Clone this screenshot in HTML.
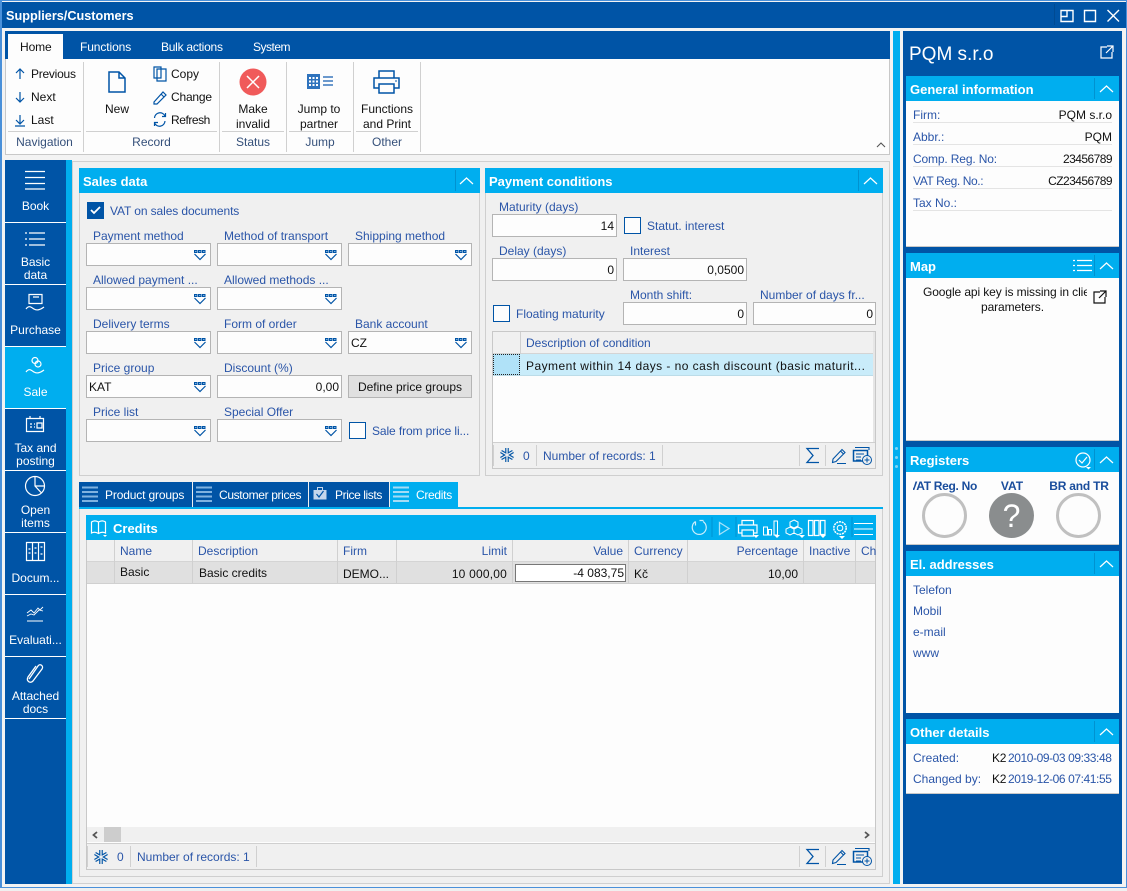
<!DOCTYPE html>
<html><head><meta charset="utf-8"><title>Suppliers/Customers</title>
<style>
html,body{margin:0;padding:0}
body{width:1127px;height:891px;position:relative;overflow:hidden;background:#f0f0f0;font:12px "Liberation Sans",sans-serif;color:#111}
.b{position:absolute;box-sizing:border-box}
.t{position:absolute;white-space:nowrap;line-height:16px;color:#111}
.l{color:#2a55a8}
.n{color:#fff;text-align:center;width:61px;left:5px;line-height:13px;white-space:normal}
.h{position:absolute;background:#00aeef;height:25px}
.h b{position:absolute;left:4px;top:5px;color:#fff;font-size:13px;line-height:17px;white-space:nowrap}
.h i{position:absolute;right:24px;top:2px;width:1px;height:21px;background:#0092d0}
.f{position:absolute;box-sizing:border-box;background:#fdfdfd;border:1px solid #b4b4b4;height:23px}
.c{position:absolute;box-sizing:border-box;width:17px;height:17px;border:1.5px solid #0054a6;background:#fdfdfd}
svg{position:absolute;overflow:visible;fill:none}
.w{stroke:#fff;stroke-width:1.2}
.u{stroke:#0054a6;stroke-width:1.2}
.g{position:absolute;background:#d0d0d0}
.r{text-align:right}
.m{text-align:center}
.d{letter-spacing:-.55px}
</style></head><body>
<svg width="0" height="0" style="position:absolute"><defs>
<g id="cb"><path d="M0.500 1.500h2.500v2H.5zM4.500 1.500h2.500v2h-2.500zM8.500 1.500h2.500v2H8.500z" stroke="#0054a6" fill="#7fb2e0"/><path d="M0.500 5 6 10.500 11.500 5" stroke="#0054a6" stroke-width="1.200"/></g>
<path id="up" d="M0 7 6.500 1 13 7" stroke="#fff" stroke-width="1.200" fill="none"/>
<g id="bars"><path d="M0 1.500H16M0 6H16M0 10.500H16M0 15H16" stroke="#7fb2e0" stroke-width="2"/></g>
<g id="foot"><path d="M13 1.500H1L7 8.500 1 15.500H13" stroke="#0054a6" stroke-width="1.300"/><path d="M27 12 36 2.500 39 5.500 30 14.500 26.500 15.500ZM34.500 4 37.500 7M31 16.500H40" stroke="#0054a6" stroke-width="1.100"/><path d="M49 .5H63V3" stroke="#0054a6" stroke-width="1.100"/><path d="M47.500 3.500H61.500V14H47.500Z" stroke="#0054a6" stroke-width="1.500"/><path d="M50 7H58M50 10H55M50 13H55" stroke="#0054a6"/><circle cx="61" cy="13" r="4.500" fill="#f0f0f0" stroke="#0054a6"/><path d="M58.500 13H63.500M61 10.500V15.500" stroke="#0054a6"/></g>
<g id="snow"><path d="M8 1V15M2 4.500 14 11.500M14 4.500 2 11.500" stroke="#0054a6" stroke-width="3.600"/><path d="M8 1V15M2 4.500 14 11.500M14 4.500 2 11.500" stroke="#f0f0f0" stroke-width="1.300"/></g>
</defs></svg>

<!-- window -->
<div class="b" style="left:0;top:0;width:1127px;height:888px;background:#f3f3f3;border:1px solid #4a90d9;border-left-width:2px"></div>
<div class="b" style="left:2px;top:2px;width:1124px;height:26px;background:#0054a6"></div>
<div class="t" style="left:6px;top:8px;color:#fff;font-weight:bold;font-size:12.700px">Suppliers/Customers</div>
<div class="g" style="left:1054px;top:4px;width:1px;height:21px;background:#004a92"></div>
<svg style="left:1060px;top:9px" width="60" height="14"><path d="M1 1.500h12v11H1zM1 7.500h6V1.500" stroke="#fff" stroke-width="1.400"/><path d="M24.500 1.500h11v11H24.500z" stroke="#fff" stroke-width="1.400"/><path d="M47.500 1 59 12.500M59 1 47.500 12.500" stroke="#fff" stroke-width="1.400"/></svg>

<!-- ribbon -->
<div class="b" style="left:5px;top:31px;width:885px;height:124px;background:#fdfdfd;border:1px solid #c8c8c8"></div>
<div class="b" style="left:5px;top:31px;width:885px;height:28px;background:#0054a6"></div>
<div class="b" style="left:8px;top:34px;width:55px;height:25px;background:#fdfdfd"></div>
<div class="t" style="left:20px;top:39px;letter-spacing:-.1px">Home</div>
<div class="t" style="left:80px;top:39px;color:#fff;letter-spacing:-.1px">Functions</div>
<div class="t" style="left:161px;top:39px;color:#fff;letter-spacing:-.25px">Bulk actions</div>
<div class="t" style="left:253px;top:39px;color:#fff;letter-spacing:-.5px">System</div>
<div class="g" style="left:83px;top:62px;width:1px;height:90px"></div>
<div class="g" style="left:219px;top:62px;width:1px;height:90px"></div>
<div class="g" style="left:286px;top:62px;width:1px;height:90px"></div>
<div class="g" style="left:353px;top:62px;width:1px;height:90px"></div>
<div class="g" style="left:420px;top:62px;width:1px;height:90px"></div>
<div class="g" style="left:8px;top:131px;width:73px;height:1px"></div>
<div class="g" style="left:86px;top:131px;width:131px;height:1px"></div>
<div class="g" style="left:222px;top:131px;width:62px;height:1px"></div>
<div class="g" style="left:289px;top:131px;width:62px;height:1px"></div>
<div class="g" style="left:356px;top:131px;width:62px;height:1px"></div>
<svg style="left:15px;top:68px" width="10" height="60"><path d="M5 1V11M1 5 5 1 9 5M5 24V34M1 30 5 34 9 30M5 47V56M1 52 5 56 9 52M0 58H10" class="u"/></svg>
<div class="t" style="left:31px;top:66px;letter-spacing:-.25px">Previous</div>
<div class="t" style="left:31px;top:89px">Next</div>
<div class="t" style="left:31px;top:112px">Last</div>
<svg style="left:108px;top:71px" width="18" height="22"><path d="M1 1h10l6 6v14H1zM11 1v6h6" stroke="#0054a6" stroke-width="1.500"/></svg>
<div class="t m" style="left:97px;top:101px;width:40px">New</div>
<svg style="left:153px;top:66px" width="14" height="62"><path d="M1 1h7v11H1zM4 3h9v12H4z" class="u" fill="#fdfdfd"/><path d="M1 36 10 26l3 3-9 9H1zM8 28l3 3" class="u"/><path d="M1.500 52a5.500 5.500 0 0 1 10.500-2M12.500 47v3.500H9M12 55a5.500 5.500 0 0 1-10.500 2M1.500 60v-3.500H5" class="u"/></svg>
<div class="t" style="left:171px;top:66px">Copy</div>
<div class="t" style="left:171px;top:89px;letter-spacing:-.2px">Change</div>
<div class="t" style="left:171px;top:112px;letter-spacing:-.45px">Refresh</div>
<svg style="left:239px;top:68px" width="28" height="28"><circle cx="14" cy="14" r="13.500" fill="#f05a5a"/><path d="M8 8 20 20M20 8 8 20" stroke="#fff" stroke-width="1.500"/></svg>
<div class="t m" style="left:223px;top:102px;width:60px;line-height:15px">Make<br>invalid</div>
<svg style="left:307px;top:74px" width="26" height="16"><path d="M0 0h13v15H0z" fill="#2f73bd"/><path d="M2 3h2v2H2zM5.500 3h2v2h-2zM9 3h2v2H9zM2 6.500h2v2H2zM5.500 6.500h2v2h-2zM9 6.500h2v2H9zM2 10h2v2H2zM5.500 10h2v2h-2zM9 10h2v2H9z" fill="#fff"/><path d="M16 3H26M16 7H26M16 11H26" stroke="#3b78bd" stroke-width="1.500"/></svg>
<div class="t m" style="left:289px;top:102px;width:60px;line-height:15px">Jump to<br>partner</div>
<svg style="left:373px;top:70px" width="27" height="25"><path d="M6 8V1h15v7M6 18H1V8h25v10h-5M6 14h15v9H6z" stroke="#0054a6" stroke-width="1.500"/><path d="M22 11h2" stroke="#0054a6"/></svg>
<div class="t m" style="left:354px;top:102px;width:66px;line-height:15px">Functions<br>and Print</div>
<div class="t m l" style="left:8px;top:134px;width:73px;color:#35507a">Navigation</div>
<div class="t m" style="left:86px;top:134px;width:131px;color:#35507a">Record</div>
<div class="t m" style="left:222px;top:134px;width:62px;color:#35507a">Status</div>
<div class="t m" style="left:289px;top:134px;width:62px;color:#35507a">Jump</div>
<div class="t m" style="left:356px;top:134px;width:62px;color:#35507a">Other</div>
<svg style="left:876px;top:142px" width="10" height="6"><path d="M1 5 5 1 9 5" stroke="#555" stroke-width="1.100"/></svg>

<!-- left nav -->
<div class="b" style="left:5px;top:160px;width:61px;height:724px;background:#0054a6"></div>
<div class="b" style="left:66px;top:160px;width:6px;height:724px;background:#00aeef"></div>
<div class="b" style="left:5px;top:346px;width:61px;height:62px;background:#00aeef"></div>
<div class="b" style="left:5px;top:222px;width:61px;height:1px;background:#fff"></div>
<div class="b" style="left:5px;top:284px;width:61px;height:1px;background:#fff"></div>
<div class="b" style="left:5px;top:346px;width:61px;height:1px;background:#fff"></div>
<div class="b" style="left:5px;top:408px;width:61px;height:1px;background:#fff"></div>
<div class="b" style="left:5px;top:470px;width:61px;height:1px;background:#fff"></div>
<div class="b" style="left:5px;top:532px;width:61px;height:1px;background:#fff"></div>
<div class="b" style="left:5px;top:594px;width:61px;height:1px;background:#fff"></div>
<div class="b" style="left:5px;top:656px;width:61px;height:1px;background:#fff"></div>
<div class="b" style="left:5px;top:718px;width:61px;height:1px;background:#fff"></div>
<svg style="left:25px;top:171px" width="20" height="20"><path d="M0 .5H20M0 6.500H20M0 12.500H20M0 18H20" class="w"/></svg>
<div class="t n" style="top:200px">Book</div>
<svg style="left:25px;top:232px" width="20" height="16"><path d="M0 1h2M0 7h2M0 13h2" class="w"/><path d="M4 1H20M4 7H20M4 13H20" class="w"/></svg>
<div class="t n" style="top:256px">Basic<br>data</div>
<svg style="left:26px;top:294px" width="20" height="20"><path d="M3 .5h13v9H3zM7 3h6" class="w"/><path d="M0 15c3-4 5-2 8 0s6 1 10-2" class="w"/></svg>
<div class="t n" style="top:324px">Purchase</div>
<svg style="left:26px;top:357px" width="20" height="20"><circle cx="9" cy="3.500" r="3" class="w"/><circle cx="12" cy="7" r="3" class="w"/><path d="M0 15c3-4 5-2 8 0s6 1 10-2" class="w"/></svg>
<div class="t n" style="top:386px">Sale</div>
<svg style="left:26px;top:416px" width="19" height="17"><path d="M.5 2.500h17v13H.5zM4 0v3M14 0v3M4 8h2M4 11h2M8 8h1M8 11h1M11 7h5v5h-5z" class="w"/></svg>
<div class="t n" style="top:442px">Tax and<br>posting</div>
<svg style="left:25px;top:476px" width="20" height="20"><circle cx="10" cy="10" r="9.500" class="w"/><path d="M10 .5V10L16.500 17M10 10H19.500" class="w"/></svg>
<div class="t n" style="top:504px">Open<br>items</div>
<svg style="left:26px;top:542px" width="19" height="19"><path d="M.5.5h18v18H.5zM6.500.5v18M12.500.5v18M2.500 7h2M2.500 11h2M8.500 6h2M8.500 11h2M14.500 5h2M14.500 12h2" class="w"/></svg>
<div class="t n" style="top:572px">Docum...</div>
<svg style="left:27px;top:605px" width="17" height="17"><path d="M0 8 4 5 7 8 11 3 13 5 16 2M0 11l4-2 3 1 5-5 4 1M0 16H16" stroke="#fff" stroke-width=".9"/></svg>
<div class="t n" style="top:634px">Evaluati...</div>
<svg style="left:27px;top:662px" width="17" height="24"><path d="M3 18 12 5c2-3 6 0 4 3L7 20c-3 3-7 0-5-4L10 5" stroke="#fff" stroke-width="1.300" transform="translate(-1 -1)"/></svg>
<div class="t n" style="top:690px">Attached<br>docs</div>

<!-- content frame -->
<div class="b" style="left:72px;top:161px;width:818px;height:723px;background:#f0f0f0;border:1px solid #d0d0d0"></div>

<!-- Sales data -->
<div class="b" style="left:79px;top:168px;width:401px;height:308px;border:1px solid #cfcfcf"></div>
<div class="h" style="left:79px;top:168px;width:401px"><b>Sales data</b><i></i></div>
<svg style="left:460px;top:177px" width="14" height="8"><use href="#up"/></svg>
<div class="c" style="left:87px;top:202px;background:#0054a6"></div>
<svg style="left:90px;top:206px" width="11" height="9"><path d="M1 4 4 7 10 1" stroke="#fff" stroke-width="1.800"/></svg>
<div class="t l" style="left:110px;top:203px;letter-spacing:-.1px">VAT on sales documents</div>

<div class="t l" style="left:93px;top:228px">Payment method</div>
<div class="t l" style="left:224px;top:228px">Method of transport</div>
<div class="t l" style="left:355px;top:228px">Shipping method</div>
<div class="f" style="left:86px;top:243px;width:125px"></div>
<div class="f" style="left:217px;top:243px;width:125px"></div>
<div class="f" style="left:348px;top:243px;width:124px"></div>
<svg style="left:194px;top:249px" width="12" height="12"><use href="#cb"/></svg>
<svg style="left:325px;top:249px" width="12" height="12"><use href="#cb"/></svg>
<svg style="left:455px;top:249px" width="12" height="12"><use href="#cb"/></svg>

<div class="t l" style="left:93px;top:272px">Allowed payment ...</div>
<div class="t l" style="left:224px;top:272px">Allowed methods ...</div>
<div class="f" style="left:86px;top:287px;width:125px"></div>
<div class="f" style="left:217px;top:287px;width:125px"></div>
<svg style="left:194px;top:293px" width="12" height="12"><use href="#cb"/></svg>
<svg style="left:325px;top:293px" width="12" height="12"><use href="#cb"/></svg>

<div class="t l" style="left:93px;top:316px">Delivery terms</div>
<div class="t l" style="left:224px;top:316px">Form of order</div>
<div class="t l" style="left:355px;top:316px">Bank account</div>
<div class="f" style="left:86px;top:331px;width:125px"></div>
<div class="f" style="left:217px;top:331px;width:125px"></div>
<div class="f" style="left:348px;top:331px;width:124px"></div>
<div class="t" style="left:351px;top:335px">CZ</div>
<svg style="left:194px;top:337px" width="12" height="12"><use href="#cb"/></svg>
<svg style="left:325px;top:337px" width="12" height="12"><use href="#cb"/></svg>
<svg style="left:455px;top:337px" width="12" height="12"><use href="#cb"/></svg>

<div class="t l" style="left:93px;top:360px">Price group</div>
<div class="t l" style="left:224px;top:360px">Discount (%)</div>
<div class="f" style="left:86px;top:375px;width:125px"></div>
<div class="f" style="left:217px;top:375px;width:125px"></div>
<div class="t" style="left:89px;top:379px">KAT</div>
<div class="t r" style="left:220px;top:379px;width:119px">0,00</div>
<svg style="left:194px;top:381px" width="12" height="12"><use href="#cb"/></svg>
<div class="b" style="left:348px;top:375px;width:124px;height:23px;background:#e0e0e0;border:1px solid #b4b4b4"></div>
<div class="t m" style="left:348px;top:379px;width:124px">Define price groups</div>

<div class="t l" style="left:93px;top:404px">Price list</div>
<div class="t l" style="left:224px;top:404px">Special Offer</div>
<div class="f" style="left:86px;top:419px;width:125px"></div>
<div class="f" style="left:217px;top:419px;width:125px"></div>
<svg style="left:194px;top:425px" width="12" height="12"><use href="#cb"/></svg>
<svg style="left:325px;top:425px" width="12" height="12"><use href="#cb"/></svg>
<div class="c" style="left:349px;top:422px"></div>
<div class="t l" style="left:372px;top:423px;letter-spacing:-.1px">Sale from price li...</div>

<!-- Payment conditions -->
<div class="b" style="left:485px;top:168px;width:398px;height:308px;border:1px solid #cfcfcf"></div>
<div class="h" style="left:485px;top:168px;width:398px"><b>Payment conditions</b><i></i></div>
<svg style="left:864px;top:177px" width="14" height="8"><use href="#up"/></svg>
<div class="t l" style="left:499px;top:199px">Maturity (days)</div>
<div class="f" style="left:492px;top:214px;width:125px"></div>
<div class="t r" style="left:495px;top:218px;width:119px">14</div>
<div class="c" style="left:624px;top:217px"></div>
<div class="t l" style="left:647px;top:218px">Statut. interest</div>
<div class="t l" style="left:499px;top:243px">Delay (days)</div>
<div class="t l" style="left:630px;top:243px">Interest</div>
<div class="f" style="left:492px;top:258px;width:125px"></div>
<div class="f" style="left:623px;top:258px;width:124px"></div>
<div class="t r" style="left:495px;top:262px;width:119px">0</div>
<div class="t r" style="left:626px;top:262px;width:118px">0,0500</div>
<div class="c" style="left:493px;top:305px"></div>
<div class="t l" style="left:516px;top:306px">Floating maturity</div>
<div class="t l" style="left:630px;top:287px">Month shift:</div>
<div class="t l" style="left:760px;top:287px">Number of days fr...</div>
<div class="f" style="left:623px;top:302px;width:124px"></div>
<div class="f" style="left:753px;top:302px;width:123px"></div>
<div class="t r" style="left:626px;top:306px;width:118px">0</div>
<div class="t r" style="left:756px;top:306px;width:117px">0</div>

<div class="b" style="left:492px;top:331px;width:384px;height:138px;background:#fdfdfd;border:1px solid #c8c8c8"></div>
<div class="b" style="left:493px;top:332px;width:382px;height:22px;background:#f0f0f0;border-bottom:1px solid #d4d4d4"></div>
<div class="g" style="left:520px;top:332px;width:1px;height:22px"></div>
<div class="t l" style="left:526px;top:335px">Description of condition</div>
<div class="b" style="left:493px;top:354px;width:380px;height:22px;background:#c9ecfa;border-bottom:1px solid #bcdce8"></div>
<div class="b" style="left:493px;top:354px;width:27px;height:21px;background:#b0e2f8;border:1px dotted #222"></div>
<div class="t" style="left:526px;top:358px;letter-spacing:.45px">Payment within 14 days - no cash discount (basic maturit...</div>
<div class="b" style="left:873px;top:332px;width:2px;height:110px;background:#e6e6e6"></div>
<div class="b" style="left:493px;top:442px;width:382px;height:26px;background:#f0f0f0;border-top:1px solid #cfcfcf"></div>
<div class="g" style="left:493px;top:445px;width:1px;height:21px"></div>
<div class="g" style="left:536px;top:445px;width:1px;height:21px"></div>
<div class="g" style="left:662px;top:445px;width:1px;height:21px"></div>
<div class="g" style="left:799px;top:445px;width:1px;height:21px"></div>
<div class="g" style="left:825px;top:445px;width:1px;height:21px"></div>
<svg style="left:499px;top:447px" width="16" height="16"><use href="#snow"/></svg>
<div class="t l" style="left:523px;top:448px">0</div>
<div class="t l" style="left:543px;top:448px">Number of records: 1</div>
<svg style="left:806px;top:447px" width="68" height="20"><use href="#foot"/></svg>

<!-- Tabs -->
<div class="b" style="left:79px;top:482px;width:113px;height:25px;background:#0054a6"></div>
<div class="b" style="left:193px;top:482px;width:115px;height:25px;background:#0054a6"></div>
<div class="b" style="left:309px;top:482px;width:80px;height:25px;background:#0054a6"></div>
<div class="b" style="left:390px;top:482px;width:68px;height:25px;background:#00aeef"></div>
<div class="b" style="left:79px;top:507px;width:804px;height:2px;background:#00aeef"></div>
<svg style="left:82px;top:486px" width="16" height="16"><use href="#bars"/></svg>
<svg style="left:196px;top:486px" width="16" height="16"><use href="#bars"/></svg>
<svg style="left:393px;top:486px" width="16" height="16"><path d="M0 1.500H16M0 6H16M0 10.500H16M0 15H16" stroke="#a5dcf5" stroke-width="2"/></svg>
<svg style="left:313px;top:487px" width="14" height="13"><path d="M.5 3h13v9.500H.5z" fill="#c4d6ec"/><path d="M4.500 3V.5h5V3" stroke="#c4d6ec"/><path d="M3.500 7l2.500 3 4.500-6" stroke="#0054a6" stroke-width="1.200"/></svg>
<div class="t" style="left:105px;top:487px;color:#fff;letter-spacing:-.15px">Product groups</div>
<div class="t" style="left:219px;top:487px;color:#fff;letter-spacing:-.35px">Customer prices</div>
<div class="t" style="left:335px;top:487px;color:#fff;letter-spacing:-.4px">Price lists</div>
<div class="t" style="left:416px;top:487px;color:#fff;letter-spacing:-.3px">Credits</div>

<!-- Credits panel -->
<div class="b" style="left:79px;top:509px;width:804px;height:368px;border:1px solid #cfcfcf;border-top:0"></div>
<div class="b" style="left:86px;top:515px;width:790px;height:355px;background:#fdfdfd;border:1px solid #c8c8c8"></div>
<div class="h" style="left:86px;top:515px;width:790px"><b style="left:27px">Credits</b></div>
<svg style="left:91px;top:520px" width="16" height="17"><path d="M7.500 2C5 .5 2.500.5 .5 2V13C2.500 12 5 12 7.500 13.500 10 12 12.500 12 14.500 13V2C12.500.5 10 .5 7.500 2ZM7.500 2V13.500" class="w"/><path d="M12 15h4l-2 2z" fill="#fff"/></svg>
<svg style="left:690px;top:519px" width="186" height="19"><path d="M5.500 2.500A7 7 0 1 0 13 2.500M13.500 1.500 9.500 1.500M5.500 2.500V6.500" stroke="#cbeefc" stroke-width="1.200"/>
<path d="M22 -2V18M46 -2V18M162 -2V18" stroke="#0092d0"/>
<path d="M29.500 3.500 39 9.500 29.500 15.500Z" stroke="#a5e2fa" stroke-width="1.300"/>
<path d="M52 6V1.500H63.500V6M52 14H48.500V6H67V14H63.500M52 11H63.500V17H52z" stroke="#fff" stroke-width="1.200"/><path d="M63 16h6l-3 3z" fill="#fff"/>
<path d="M73.500 8h4v8h-4zM78.500 10.500h3v5.500h-3zM84 2h3.500v14H84z" stroke="#fff"/><path d="M84 16h6l-3 3z" fill="#fff"/>
<path d="M104 1l4 2v4l-4 2-4-2V3zM100 8l4 2v4l-4 2-4-2v-4zM108 8l4 2v4l-4 2-4-2v-4z" stroke="#fff"/><path d="M109 16h6l-3 3z" fill="#fff"/>
<path d="M118.500 1.500h4.500v15h-4.500zM124.500 1.500h4.500v15h-4.500zM130.500 1.500h4.500v14h-4.500z" stroke="#fff" stroke-width="1.200"/><path d="M130 16h6l-3 3z" fill="#fff"/>
<circle cx="150" cy="9" r="6.200" stroke="#fff" stroke-width="1.500" stroke-dasharray="2 .8"/><circle cx="150" cy="9" r="2.800" stroke="#fff"/><path d="M149 17h6l-3 3z" fill="#fff"/>
<path d="M164 4.500H183M164 10H183M164 15.500H183" stroke="#fff"/></svg>
<div class="b" style="left:87px;top:540px;width:788px;height:22px;background:#f0f0f0;border-bottom:1px solid #d4d4d4"></div>
<div class="b" style="left:87px;top:562px;width:788px;height:22px;background:#e0e0e0;border-bottom:1px solid #d0d0d0"></div>
<div class="g" style="left:114px;top:540px;width:1px;height:44px"></div>
<div class="g" style="left:192px;top:540px;width:1px;height:44px"></div>
<div class="g" style="left:337px;top:540px;width:1px;height:44px"></div>
<div class="g" style="left:396px;top:540px;width:1px;height:44px"></div>
<div class="g" style="left:512px;top:540px;width:1px;height:44px"></div>
<div class="g" style="left:628px;top:540px;width:1px;height:44px"></div>
<div class="g" style="left:687px;top:540px;width:1px;height:44px"></div>
<div class="g" style="left:803px;top:540px;width:1px;height:44px"></div>
<div class="g" style="left:855px;top:540px;width:1px;height:44px"></div>
<div class="t l" style="left:120px;top:543px">Name</div>
<div class="t l" style="left:198px;top:543px">Description</div>
<div class="t l" style="left:343px;top:543px">Firm</div>
<div class="t l r" style="left:400px;top:543px;width:107px">Limit</div>
<div class="t l r" style="left:516px;top:543px;width:107px">Value</div>
<div class="t l" style="left:634px;top:543px">Currency</div>
<div class="t l r" style="left:690px;top:543px;width:108px">Percentage</div>
<div class="t l" style="left:809px;top:543px">Inactive</div>
<div class="t l" style="left:861px;top:543px">Ch</div>
<div class="t" style="left:120px;top:564px">Basic</div>
<div class="t" style="left:199px;top:565px">Basic credits</div>
<div class="t" style="left:343px;top:566px">DEMO...</div>
<div class="t r" style="left:400px;top:566px;width:107px;letter-spacing:.2px">10 000,00</div>
<div class="b" style="left:515px;top:564px;width:111px;height:18px;background:#fff;border:1px solid #777"></div>
<div class="t r" style="left:516px;top:565px;width:108px">-4 083,75</div>
<div class="t" style="left:634px;top:566px">Kč</div>
<div class="t r" style="left:690px;top:566px;width:108px">10,00</div>
<div class="b" style="left:87px;top:827px;width:788px;height:15px;background:#f0f0f0"></div>
<div class="b" style="left:104px;top:827px;width:17px;height:15px;background:#cdcdcd"></div>
<svg style="left:92px;top:831px" width="6" height="8"><path d="M5 1 1.500 4 5 7" stroke="#555" stroke-width="1.800"/></svg>
<svg style="left:864px;top:831px" width="6" height="8"><path d="M1 1 4.500 4 1 7" stroke="#555" stroke-width="1.800"/></svg>
<div class="b" style="left:87px;top:843px;width:788px;height:26px;background:#f0f0f0;border-top:1px solid #cfcfcf"></div>
<div class="g" style="left:87px;top:846px;width:1px;height:21px"></div>
<div class="g" style="left:130px;top:846px;width:1px;height:21px"></div>
<div class="g" style="left:256px;top:846px;width:1px;height:21px"></div>
<div class="g" style="left:799px;top:846px;width:1px;height:21px"></div>
<div class="g" style="left:825px;top:846px;width:1px;height:21px"></div>
<svg style="left:93px;top:849px" width="16" height="16"><use href="#snow"/></svg>
<div class="t l" style="left:117px;top:849px">0</div>
<div class="t l" style="left:137px;top:849px">Number of records: 1</div>
<svg style="left:806px;top:848px" width="68" height="20"><use href="#foot"/></svg>

<!-- splitter -->
<div class="b" style="left:893px;top:31px;width:7px;height:853px;background:#00aeef"></div>
<div class="b" style="left:895px;top:447px;width:3px;height:3px;border-radius:2px;background:#7fd4f5"></div>
<div class="b" style="left:895px;top:456px;width:3px;height:3px;border-radius:2px;background:#7fd4f5"></div>
<div class="b" style="left:895px;top:465px;width:3px;height:3px;border-radius:2px;background:#7fd4f5"></div>

<!-- right panel -->
<div class="b" style="left:903px;top:31px;width:219px;height:853px;background:#0054a6"></div>
<div class="t" style="left:909px;top:42px;color:#fff;font-size:19px;line-height:26px">PQM s.r.o</div>
<svg style="left:1100px;top:45px" width="14" height="14"><path d="M7 2H1V13H12V7M7 1H13V7M13 1 6 8" stroke="#fff" stroke-width="1.200"/></svg>

<div class="b" style="left:906px;top:76px;width:213px;height:171px;background:#fdfdfd;border-bottom:1px solid #c8c8c8"></div>
<div class="h" style="left:906px;top:76px;width:213px"><b>General information</b><i></i></div>
<svg style="left:1100px;top:85px" width="14" height="8"><use href="#up"/></svg>
<div class="g" style="left:913px;top:122px;width:199px;height:1px;background:#e4e4e4"></div>
<div class="g" style="left:913px;top:144px;width:199px;height:1px;background:#e4e4e4"></div>
<div class="g" style="left:913px;top:166px;width:199px;height:1px;background:#e4e4e4"></div>
<div class="g" style="left:913px;top:188px;width:199px;height:1px;background:#e4e4e4"></div>
<div class="g" style="left:913px;top:210px;width:199px;height:1px;background:#e4e4e4"></div>
<div class="t l" style="left:913px;top:107px">Firm:</div>
<div class="t l" style="left:913px;top:129px">Abbr.:</div>
<div class="t l" style="left:913px;top:151px;letter-spacing:-.15px">Comp. Reg. No:</div>
<div class="t l" style="left:913px;top:173px;letter-spacing:-.4px">VAT Reg. No.:</div>
<div class="t l" style="left:913px;top:195px">Tax No.:</div>
<div class="t r" style="left:1012px;top:107px;width:100px">PQM s.r.o</div>
<div class="t r" style="left:1012px;top:129px;width:100px">PQM</div>
<div class="t r d" style="left:1012px;top:151px;width:100px">23456789</div>
<div class="t r d" style="left:1012px;top:173px;width:100px">CZ23456789</div>

<div class="b" style="left:906px;top:253px;width:213px;height:188px;background:#fdfdfd;border-bottom:1px solid #c8c8c8"></div>
<div class="h" style="left:906px;top:253px;width:213px"><b>Map</b><i></i></div>
<svg style="left:1073px;top:260px" width="20" height="12"><path d="M0 .5h2M0 5.500h2M0 10.500h2" class="w"/><path d="M4 .5H19M4 5.500H19M4 10.500H19" class="w"/></svg>
<svg style="left:1100px;top:262px" width="14" height="8"><use href="#up"/></svg>
<div class="b" style="left:913px;top:278px;width:174px;height:40px;overflow:hidden">
<div class="t" style="left:10px;top:6px;letter-spacing:-.1px">Google api key is missing in client</div>
<div class="t" style="left:68px;top:21px;letter-spacing:-.1px">parameters.</div></div>
<svg style="left:1093px;top:290px" width="14" height="14"><path d="M7 2H1V13H12V7M7 1H13V7M13 1 6 8" stroke="#111" stroke-width="1.200"/></svg>

<div class="b" style="left:906px;top:447px;width:213px;height:98px;background:#fdfdfd;border-bottom:1px solid #c8c8c8"></div>
<div class="h" style="left:906px;top:447px;width:213px"><b>Registers</b><i></i></div>
<svg style="left:1075px;top:452px" width="17" height="18"><circle cx="8" cy="8" r="7" class="w"/><path d="M4 8 7 11 12 5" class="w"/><path d="M11 15h5l-2.500 2.500z" fill="#fff"/></svg>
<svg style="left:1100px;top:456px" width="14" height="8"><use href="#up"/></svg>
<div class="b" style="left:913px;top:478px;width:70px;height:16px;overflow:hidden"><div class="t" style="right:6px;top:0;color:#1a4d9c;font-weight:bold;letter-spacing:-.3px">VAT Reg. No</div></div>
<div class="t m" style="left:982px;top:478px;width:60px;color:#1a4d9c;font-weight:bold">VAT</div>
<div class="t m" style="left:1049px;top:478px;width:60px;color:#1a4d9c;font-weight:bold;letter-spacing:-.2px">BR and TR</div>
<svg style="left:922px;top:493px" width="46" height="46"><circle cx="22.500" cy="22.500" r="21" stroke="#c0c0c0" stroke-width="3"/></svg>
<svg style="left:989px;top:493px" width="46" height="46"><circle cx="22.500" cy="22.500" r="22.500" fill="#8a8d8e"/></svg>
<div class="t m" style="left:989px;top:497px;width:45px;color:#fff;font-size:32px;line-height:38px">?</div>
<svg style="left:1056px;top:493px" width="46" height="46"><circle cx="22.500" cy="22.500" r="21" stroke="#c0c0c0" stroke-width="3"/></svg>

<div class="b" style="left:906px;top:551px;width:213px;height:162px;background:#fdfdfd"></div>
<div class="h" style="left:906px;top:551px;width:213px"><b>El. addresses</b><i></i></div>
<svg style="left:1100px;top:560px" width="14" height="8"><use href="#up"/></svg>
<div class="t l" style="left:913px;top:582px">Telefon</div>
<div class="t l" style="left:913px;top:603px">Mobil</div>
<div class="t l" style="left:913px;top:624px">e-mail</div>
<div class="t l" style="left:913px;top:645px">www</div>

<div class="b" style="left:906px;top:719px;width:213px;height:75px;background:#fdfdfd;border-bottom:1px solid #c8c8c8"></div>
<div class="h" style="left:906px;top:719px;width:213px"><b>Other details</b><i></i></div>
<svg style="left:1100px;top:728px" width="14" height="8"><use href="#up"/></svg>
<div class="t l" style="left:913px;top:750px">Created:</div>
<div class="t l" style="left:913px;top:771px">Changed by:</div>
<div class="t" style="left:992px;top:750px;letter-spacing:-.3px">K2</div>
<div class="t" style="left:992px;top:771px;letter-spacing:-.3px">K2</div>
<div class="t l" style="left:1008px;top:750px;letter-spacing:-.42px">2010-09-03 09:33:48</div>
<div class="t l" style="left:1008px;top:771px;letter-spacing:-.42px">2019-12-06 07:41:55</div>
</body></html>
